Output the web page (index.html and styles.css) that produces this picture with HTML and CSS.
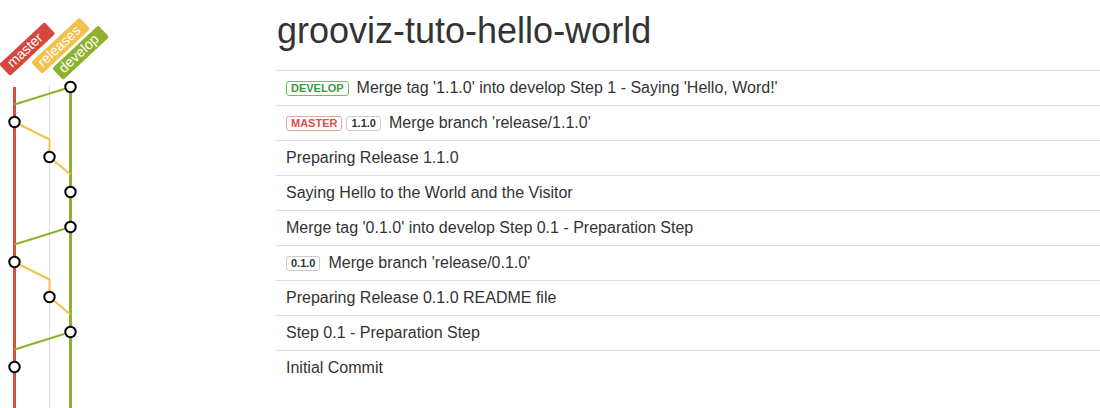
FILE: index.html
```html
<!DOCTYPE html>
<html>
<head>
<meta charset="utf-8">
<link rel="stylesheet" href="styles.css">
</head>
<body>
<div class="page">
  <div class="graph">
    <svg class="graph-svg" width="276" height="408" viewBox="0 0 276 408">
      <line x1="49.5" y1="85" x2="49.5" y2="408" stroke="#dddddd" stroke-width="1"/>
      <line x1="14.5" y1="87" x2="14.5" y2="408" stroke="#d5513f" stroke-width="3"/>
      <line x1="70.5" y1="87" x2="70.5" y2="408" stroke="#8db22d" stroke-width="3"/>
      <g fill="none" stroke-width="2" stroke-linejoin="round">
        <polyline points="70.5,87 14.5,104.5" stroke="#8db22d"/>
        <polyline points="14.5,122 49.5,139.5 49.5,157 70.5,174.5" stroke="#f0c24b"/>
        <polyline points="70.5,227 14.5,244.5" stroke="#8db22d"/>
        <polyline points="14.5,262 49.5,279.5 49.5,297 70.5,314.5" stroke="#f0c24b"/>
        <polyline points="70.5,332 14.5,349.5" stroke="#8db22d"/>
      </g>
      <g fill="#ffffff" stroke="#000000" stroke-width="2">
        <circle cx="70.5" cy="87" r="5.2"/>
        <circle cx="14.5" cy="122" r="5.2"/>
        <circle cx="49.5" cy="157" r="5.2"/>
        <circle cx="70.5" cy="192" r="5.2"/>
        <circle cx="70.5" cy="227" r="5.2"/>
        <circle cx="14.5" cy="262" r="5.2"/>
        <circle cx="49.5" cy="297" r="5.2"/>
        <circle cx="70.5" cy="332" r="5.2"/>
        <circle cx="14.5" cy="367" r="5.2"/>
      </g>
      <g class="label" transform="translate(10 76) rotate(-43)">
        <rect x="0" y="-16" width="62" height="16" rx="2" fill="#d5463c"/>
        <text x="7" y="-4">master</text>
      </g>
      <g class="label" transform="translate(42 74) rotate(-43)">
        <rect x="0" y="-16" width="66" height="16" rx="2" fill="#f2c24c"/>
        <text x="5" y="-4">releases</text>
      </g>
      <g class="label" transform="translate(63 80) rotate(-43)">
        <rect x="0" y="-16" width="63" height="16" rx="2" fill="#8db22d"/>
        <text x="5" y="-4">develop</text>
      </g>
    </svg>
  </div>
  <div class="main">
    <h1 class="title">grooviz-tuto-hello-world</h1>
    <div class="commits">
      <div class="row"><span class="badge badge-develop">DEVELOP</span><span class="msg">Merge tag '1.1.0' into develop Step 1 - Saying 'Hello, Word!'</span></div>
      <div class="row"><span class="badge badge-master">MASTER</span><span class="badge badge-tag">1.1.0</span><span class="msg">Merge branch 'release/1.1.0'</span></div>
      <div class="row"><span class="msg">Preparing Release 1.1.0</span></div>
      <div class="row"><span class="msg">Saying Hello to the World and the Visitor</span></div>
      <div class="row"><span class="msg">Merge tag '0.1.0' into develop Step 0.1 - Preparation Step</span></div>
      <div class="row"><span class="badge badge-tag">0.1.0</span><span class="msg">Merge branch 'release/0.1.0'</span></div>
      <div class="row"><span class="msg">Preparing Release 0.1.0 README file</span></div>
      <div class="row"><span class="msg">Step 0.1 - Preparation Step</span></div>
      <div class="row"><span class="msg">Initial Commit</span></div>
    </div>
  </div>
</div>
</body>
</html>
```

FILE: styles.css
```css
html, body {
  margin: 0;
  padding: 0;
  background: #ffffff;
}

body {
  font-family: "Liberation Sans", Arial, sans-serif;
  color: #333333;
  overflow: hidden;
}

.page {
  display: flex;
  height: 408px;
}

.graph {
  flex: 0 0 276px;
  width: 276px;
}

.graph-svg {
  display: block;
}

.label text {
  font-family: "Liberation Sans", Arial, sans-serif;
  font-size: 14px;
  fill: #ffffff;
}

.main {
  flex: 1 1 auto;
  min-width: 0;
}

.title {
  margin: 11px 0 19px 1px;
  font-size: 36px;
  font-weight: normal;
  line-height: 40px;
  color: #333333;
}

.commits {
  display: flex;
  flex-direction: column;
}

.row {
  display: flex;
  align-items: center;
  height: 34px;
  border-top: 1px solid #dddddd;
  padding-left: 10px;
  font-size: 16px;
}

.badge {
  display: inline-block;
  box-sizing: border-box;
  height: 15px;
  line-height: 13px;
  padding: 0 4px;
  margin-right: 4px;
  border: 1px solid #cccccc;
  border-radius: 3px;
  font-size: 11px;
  font-weight: bold;
  background: #ffffff;
}

.badge-develop {
  border-color: #6cc06c;
  color: #3c9a3c;
}

.badge-master {
  border-color: #e4a3a1;
  color: #d9534f;
}

.badge-tag {
  border-color: #cccccc;
  color: #333333;
}

.badge + .msg {
  margin-left: 4px;
}
```
